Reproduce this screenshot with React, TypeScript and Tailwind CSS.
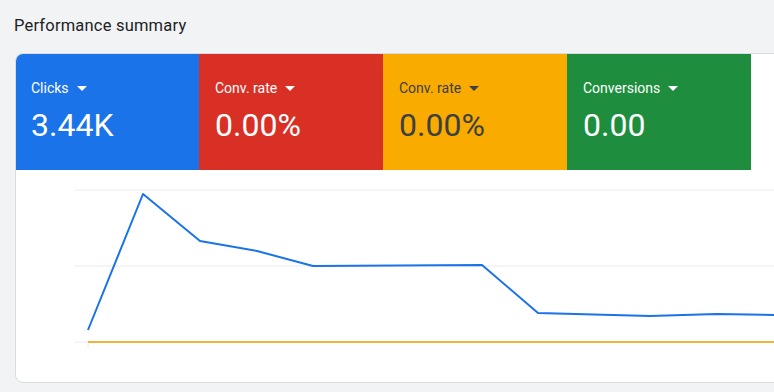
import React from "react";

const tiles = [
  { label: "Clicks", value: "3.44K", bg: "bg-[#1a73e8]", text: "text-white", arrow: "#ffffff" },
  { label: "Conv. rate", value: "0.00%", bg: "bg-[#d93025]", text: "text-white", arrow: "#ffffff" },
  { label: "Conv. rate", value: "0.00%", bg: "bg-[#f9ab00]", text: "text-[#3c4043]", arrow: "#3c4043" },
  { label: "Conversions", value: "0.00", bg: "bg-[#1e8e3e]", text: "text-white", arrow: "#ffffff" },
];

export default function App() {
  const blue = [
    [73, 160], [128, 24], [185, 71], [242, 81], [298, 96], [467, 95], [523, 143], [635, 146], [702, 144], [762, 145],
  ];
  return (
    <div className="w-[774px] h-[392px] overflow-hidden bg-[#f1f3f4] font-['Roboto',sans-serif]">
      <div className="pl-[14px] pt-[15px] h-[53px] text-[16.5px] leading-[22px] tracking-[0.2px] text-[#202124]">Performance summary</div>
      <div className="ml-[15px] w-[790px] h-[330px] bg-white border border-[#dadce0] rounded-l-[8px] overflow-hidden flex flex-col">
        <div className="flex h-[117px] -mt-px -ml-px">
          {tiles.map((t, i) => (
            <div key={i} className={`w-[184px] ${t.bg} ${t.text} pl-[16px] pt-[26px] ${i === 0 ? "rounded-tl-[8px]" : ""}`}>
              <div className="flex items-center gap-[8px] text-[14px] leading-[18px]">
                <span>{t.label}</span>
                <svg width="10" height="5" viewBox="0 0 10 5">
                  <path d="M0 0 L10 0 L5 5 Z" fill={t.arrow} />
                </svg>
              </div>
              <div className="mt-[9px] text-[32px] leading-[38px]">{t.value}</div>
            </div>
          ))}
        </div>
        <div className="flex-1">
          <svg width="790" height="212" viewBox="0 0 790 212" className="block -ml-px">
            <line x1="60" y1="20" x2="790" y2="20" stroke="#e8eaed" strokeWidth="1" />
            <line x1="60" y1="96" x2="790" y2="96" stroke="#e8eaed" strokeWidth="1" />
            <line x1="60" y1="172" x2="790" y2="172" stroke="#e8eaed" strokeWidth="1" />
            <line x1="73" y1="172" x2="73" y2="178" stroke="#e8eaed" strokeWidth="1" />
            <line x1="73" y1="172" x2="790" y2="172" stroke="#f0b43a" strokeWidth="2" />
            <polyline
              points={blue.map((p) => p.join(",")).join(" ")}
              fill="none"
              stroke="#1a73e8"
              strokeWidth="2"
              strokeLinejoin="round"
            />
          </svg>
        </div>
      </div>
    </div>
  );
}
